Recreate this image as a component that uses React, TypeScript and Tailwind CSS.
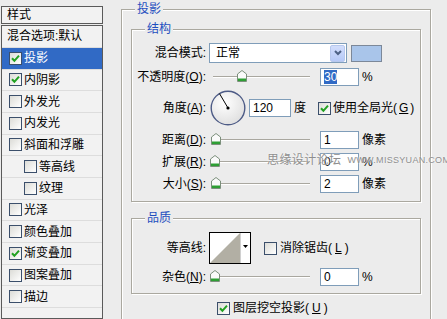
import React from "react";

const CheckBox = ({ checked = false }: { checked?: boolean }) => (
  <span className="flex h-[13px] w-[13px] shrink-0 items-center justify-center border border-[#3b4f6b] bg-gradient-to-br from-[#dcdcd7] to-white">
    {checked && (
      <svg width="9" height="9" viewBox="0 0 9 9">
        <path d="M1 4.2 L3.4 6.8 L8 1.6" stroke="#21a121" strokeWidth="2" fill="none" />
      </svg>
    )}
  </span>
);

const Slider = ({ thumb }: { thumb: string }) => (
  <div className="relative h-[18px] w-[104px] shrink-0">
    <div className="absolute left-[4px] right-[3px] top-[8px] h-[2px] border-t border-[#a9a79f] bg-white" />
    <svg className={`absolute top-[2px] ${thumb}`} width="10" height="12" viewBox="0 0 10 12">
      <path d="M5 0.5 L9.5 4 L9.5 11.5 L0.5 11.5 L0.5 4 Z" fill="#fafafa" stroke="#7b8f7b" />
      <rect x="1" y="8.5" width="8" height="2.5" fill="#2e9f34" />
    </svg>
  </div>
);

const Field = ({ children, wide = false }: { children: React.ReactNode; wide?: boolean }) => (
  <div
    className={`flex h-[18px] shrink-0 items-center border border-[#7f9db9] bg-white pl-[3px] ${
      wide ? "w-[42px]" : "w-[39px]"
    }`}
  >
    {children}
  </div>
);

const Label = ({ children }: { children: React.ReactNode }) => (
  <span className="w-[77px] shrink-0 whitespace-nowrap pr-[3px] text-right">{children}</span>
);

const Legend = ({ children }: { children: React.ReactNode }) => (
  <span className="-mt-[8px] ml-[13px] w-fit bg-[#ececec] px-[2px] text-[#1f4fbf]">{children}</span>
);

const groupBox =
  "flex flex-col border border-[#aaa89f] shadow-[inset_1px_1px_0_#fff,1px_1px_0_#fff]";

const layers = [
  { name: "投影", checked: true, selected: true },
  { name: "内阴影", checked: true },
  { name: "外发光" },
  { name: "内发光" },
  { name: "斜面和浮雕" },
  { name: "等高线", indent: true },
  { name: "纹理", indent: true },
  { name: "光泽" },
  { name: "颜色叠加" },
  { name: "渐变叠加", checked: true },
  { name: "图案叠加" },
  { name: "描边" },
];

export default function App() {
  return (
    <div className="relative flex h-[319px] w-[447px] overflow-hidden bg-[#ececec] font-['Liberation_Sans','Noto_Sans_CJK_SC',sans-serif] text-[12px] leading-[14px] text-black">
      {/* style list */}
      <div className="ml-[1px] mt-[6px] flex w-[102px] shrink-0 flex-col">
        <div className="flex h-[24px] items-center border border-[#5a5a5a] bg-[#f2f2f2] pl-[5px]">样式</div>
        <div className="mt-[1px] flex h-[400px] flex-col border border-[#5a5a5a] bg-[#f2f2f2]">
          <div className="flex h-[21.7px] shrink-0 items-center border-b border-[#dddddd] pl-[5px]">
            混合选项:默认
          </div>
          {layers.map((l) => (
            <div
              key={l.name}
              className={`flex h-[21.7px] shrink-0 items-center gap-[2px] border-b border-[#dddddd] ${
                l.indent ? "pl-[22px]" : "pl-[7px]"
              } ${l.selected ? "bg-[#316ac5] text-white" : ""}`}
            >
              <CheckBox checked={l.checked} />
              <span>{l.name}</span>
            </div>
          ))}
        </div>
      </div>

      {/* drop shadow panel */}
      <div className="ml-[18px] mt-[9px]">
        <div className={`${groupBox} h-[330px] w-[310px]`}>
          <Legend>投影</Legend>

          <div className={`${groupBox} ml-[9px] mt-[13px] h-[173px] w-[290px]`}>
            <Legend>结构</Legend>

            <div className="mt-[7px] flex h-[20px] items-center">
              <Label>混合模式:</Label>
              <div className="flex h-[20px] w-[138px] items-center border border-[#7f9db9] bg-white pl-[6px]">
                正常
                <span className="ml-auto mr-[1px] flex h-[17px] w-[15px] items-center justify-center rounded-[2px] border border-[#b7c8ee] bg-gradient-to-b from-[#d3defc] to-[#b6c9f7]">
                  <svg width="8" height="6" viewBox="0 0 8 6">
                    <path d="M1 1 L4 4 L7 1" stroke="#4d6185" strokeWidth="2" fill="none" />
                  </svg>
                </span>
              </div>
              <span className="ml-[4px] h-[17px] w-[31px] border border-[#7c8899] bg-[#a9c5ea]" />
            </div>

            <div className="mt-[5px] flex h-[18px] items-center">
              <Label>
                不透明度(<u>O</u>):
              </Label>
              <Slider thumb="left-[28px]" />
              <span className="ml-[7px]">
                <Field>
                  <span className="bg-[#316ac5] text-white">30</span>
                </Field>
              </span>
              <span className="ml-[3px]">%</span>
            </div>

            <div className="mt-[4px] flex h-[36px] items-center">
              <Label>
                角度(<u>A</u>):
              </Label>
              <svg className="ml-[1px] shrink-0" width="36" height="36" viewBox="0 0 36 36">
                <defs>
                  <radialGradient id="dial" cx="40%" cy="35%" r="70%">
                    <stop offset="0%" stopColor="#ffffff" />
                    <stop offset="100%" stopColor="#dedede" />
                  </radialGradient>
                </defs>
                <circle cx="18" cy="18" r="16.8" fill="url(#dial)" stroke="#4d5b86" strokeWidth="1.4" />
                <line x1="18" y1="18" x2="9.5" y2="3.6" stroke="#000" strokeWidth="1" />
                <circle cx="18" cy="18" r="1.6" fill="#000" />
              </svg>
              <span className="ml-[3px]">
                <Field wide>120</Field>
              </span>
              <span className="ml-[3px]">度</span>
              <span className="ml-[12px] flex items-center gap-[2px] whitespace-nowrap">
                <CheckBox checked />
                使用全局光(<u>G</u>)
              </span>
            </div>

            <div className="mt-[5px] flex h-[18px] items-center">
              <Label>
                距离(<u>D</u>):
              </Label>
              <Slider thumb="left-[2px]" />
              <span className="ml-[7px]">
                <Field>1</Field>
              </span>
              <span className="ml-[3px]">像素</span>
            </div>

            <div className="mt-[4px] flex h-[18px] items-center">
              <Label>
                扩展(<u>R</u>):
              </Label>
              <Slider thumb="left-[1px]" />
              <span className="ml-[7px]">
                <Field>0</Field>
              </span>
              <span className="ml-[3px]">%</span>
            </div>

            <div className="mt-[4px] flex h-[18px] items-center">
              <Label>
                大小(<u>S</u>):
              </Label>
              <Slider thumb="left-[2px]" />
              <span className="ml-[7px]">
                <Field>2</Field>
              </span>
              <span className="ml-[3px]">像素</span>
            </div>
          </div>

          <div className={`${groupBox} ml-[9px] mt-[16px] h-[76px] w-[290px]`}>
            <Legend>品质</Legend>

            <div className="mt-[7px] flex h-[32px] items-center">
              <Label>等高线:</Label>
              <svg className="shrink-0" width="42" height="32" viewBox="0 0 42 32">
                <rect x="0.5" y="0.5" width="41" height="31" fill="#fff" stroke="#000" />
                <polygon points="1,31 31,1 31,31" fill="#b2afa4" />
                <line x1="31.5" y1="1" x2="31.5" y2="31" stroke="#d0d0d0" />
                <polygon points="34,13 39,13 36.5,16" fill="#000" />
              </svg>
              <span className="ml-[13px] flex items-center gap-[3px] whitespace-nowrap">
                <CheckBox />
                消除锯齿(<u>L</u>)
              </span>
            </div>

            <div className="mt-[4px] flex h-[18px] items-center">
              <Label>
                杂色(<u>N</u>):
              </Label>
              <Slider thumb="left-[1px]" />
              <span className="ml-[7px]">
                <Field>0</Field>
              </span>
              <span className="ml-[3px]">%</span>
            </div>
          </div>

          <div className="ml-[95px] mt-[7px] flex items-center gap-[3px] whitespace-nowrap">
            <CheckBox checked />
            图层挖空投影(<u>U</u>)
          </div>
        </div>
      </div>

      {/* watermark */}
      <div className="pointer-events-none absolute left-[267px] top-[153px] flex items-center gap-[6px] whitespace-nowrap text-[#8e8e8e] [text-shadow:0_0_2px_#fff]">
        <span className="tracking-[0.4px]">思缘设计论坛</span>
        <span className="text-[9px] leading-[14px] tracking-[0.3px]">WWW.MISSYUAN.COM</span>
      </div>
    </div>
  );
}
